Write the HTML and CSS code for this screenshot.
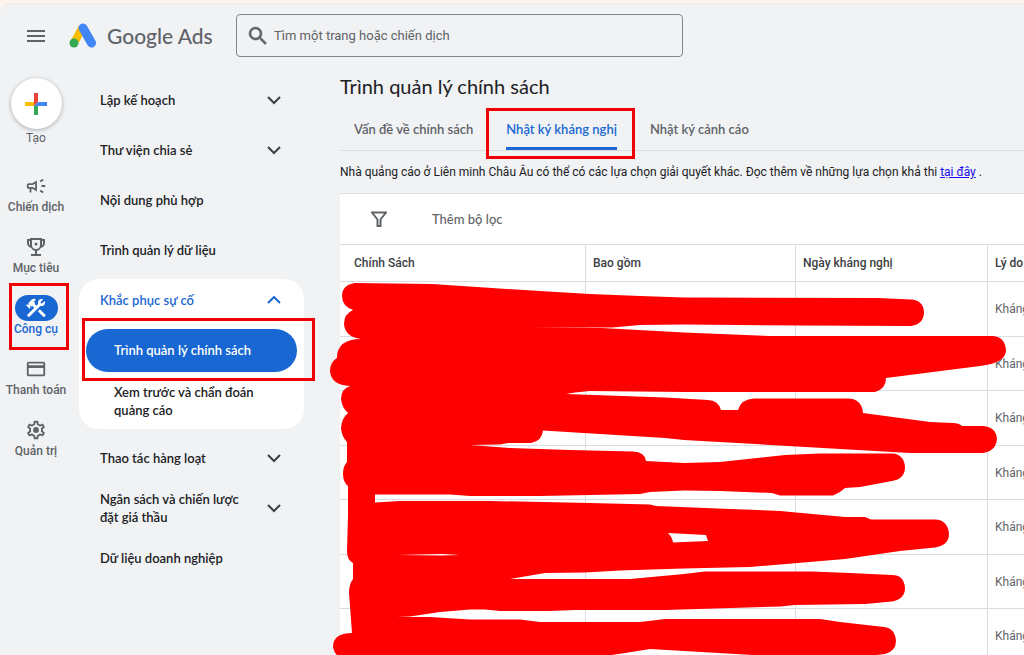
FILE: index.html
```html
<!DOCTYPE html>
<html lang="vi">
<head>
    <meta charset="UTF-8">
    <meta name="viewport" content="width=device-width, initial-scale=1.0">
    <title>Trình quản lý chính sách - Google Ads</title>
    <link rel="stylesheet" href="styles.css">
</head>
<body>
<div class="app">

    <header class="topbar">
        <button class="icon-btn" aria-label="Menu">
            <svg width="18" height="12" viewBox="0 0 18 12"><path d="M0 0h18v2H0zM0 5h18v2H0zM0 10h18v2H0z"/></svg>
        </button>
        <a class="logo" href="#">
            <svg width="28" height="26" viewBox="0 0 28 26">
                <path d="M13.500 4.500 5 20" stroke="#fbbc04" stroke-width="8" stroke-linecap="butt"/>
                <path d="M14 5 22.500 20" stroke="#4285f4" stroke-width="9" stroke-linecap="round"/>
                <circle cx="5" cy="20" r="4.500" fill="#34a853"/>
            </svg>
            <span>Google Ads</span>
        </a>
        <form class="search">
            <svg width="24" height="24" viewBox="0 0 24 24"><path stroke-width=".6" d="M15.500 14h-.79l-.28-.27A6.470 6.470 0 0 0 16 9.500 6.500 6.500 0 1 0 9.500 16c1.610 0 3.090-.59 4.230-1.570l.27.28v.79l5 4.990L20.490 19l-4.990-5zm-6 0C7.010 14 5 11.990 5 9.500S7.010 5 9.500 5 14 7.010 14 9.500 11.990 14 9.500 14z"/></svg>
            <input type="text" placeholder="Tìm một trang hoặc chiến dịch" aria-label="Tìm một trang hoặc chiến dịch">
        </form>
    </header>

    <div class="layout">
        <nav class="rail">
            <a class="rail-item create" href="#">
                <span class="create-btn">
                    <svg width="22" height="22" viewBox="0 0 22 22">
                        <path fill="#ea4335" d="M9 0h4v9l-4 4z"/>
                        <path fill="#fbbc04" d="M0 9h9v4H0z"/>
                        <path fill="#4285f4" d="M13 9h9v4H9z"/>
                        <path fill="#34a853" d="M9 13h4v9H9z"/>
                    </svg>
                </span>
                Tạo
            </a>
            <a class="rail-item" href="#">
                <span class="rail-icon"><svg width="22" height="22" viewBox="0 0 24 24"><path d="M18 11h4v2h-4zM16 17.610c.96.71 2.210 1.650 3.200 2.390.4-.53.8-1.070 1.200-1.600-.99-.74-2.240-1.680-3.200-2.400-.4.540-.8 1.080-1.200 1.610zM20.400 5.600c-.4-.53-.8-1.070-1.200-1.600-.99.740-2.240 1.680-3.200 2.400.4.530.8 1.070 1.200 1.600.96-.72 2.210-1.650 3.200-2.400zM4 9c-1.100 0-2 .9-2 2v2c0 1.100.9 2 2 2h1v4h2v-4h1l5 3V6L8 9H4zm5.030 1.710L11 9.530v4.940l-1.970-1.180-.48-.29H4v-2h4.550l.48-.29z"/></svg></span>
                Chiến dịch
            </a>
            <a class="rail-item" href="#">
                <span class="rail-icon"><svg width="24" height="24" viewBox="0 0 24 24"><path d="M21 4h-3V3H6v1H3v4c0 2.400 1.700 4.300 4 4.800A5.600 5.600 0 0 0 11 15.900V19H7v2h10v-2h-4v-3.100a5.600 5.600 0 0 0 4-3.100c2.300-.5 4-2.400 4-4.800zM5 8V6h1v4.600C5.400 10 5 9.100 5 8zm11 2a4 4 0 0 1-8 0V5h8zm3-2c0 1.100-.4 2-1 2.600V6h1z"/><circle cx="12" cy="9" r="1.500"/></svg></span>
                Mục tiêu
            </a>
            <a class="rail-item active" href="#">
                <span class="rail-icon"><svg width="24" height="24" viewBox="0 0 24 24"><path d="M13.780 15.300 19.780 21.300 21.890 19.140 15.890 13.140ZM17.500 10.100C17.110 10.100 16.690 10.050 16.360 9.910L4.970 21.250 2.860 19.140 10.270 11.740 8.500 9.960 7.780 10.660 6.330 9.250V12.110L5.630 12.810 2.110 9.250 2.810 8.550H5.620L4.220 7.140 7.780 3.580C8.950 2.410 10.830 2.410 12 3.580L9.890 5.740 11.300 7.140 10.590 7.850 12.380 9.630 14.200 7.750C14.060 7.420 14 7 14 6.630 14 4.660 15.560 3.110 17.500 3.110 18.090 3.110 18.610 3.250 19.080 3.530L16.410 6.200 17.910 7.700 20.580 5.030C20.860 5.500 21 6 21 6.630 21 8.550 19.450 10.100 17.500 10.100Z"/></svg></span>
                Công cụ
                <span class="mark mark-rail"></span>
            </a>
            <a class="rail-item" href="#">
                <span class="rail-icon"><svg width="22" height="22" viewBox="0 0 24 24"><path d="M20 4H4c-1.110 0-1.990.89-1.990 2L2 18c0 1.110.89 2 2 2h16c1.110 0 2-.89 2-2V6c0-1.110-.89-2-2-2zm0 14H4v-7h16v7zm0-10H4V6h16v2z"/></svg></span>
                Thanh toán
            </a>
            <a class="rail-item" href="#">
                <span class="rail-icon"><svg width="22" height="22" viewBox="0 0 24 24"><path d="M19.430 12.980c.04-.32.07-.64.07-.98s-.03-.66-.07-.98l2.110-1.650c.19-.15.24-.42.12-.64l-2-3.460a.5.5 0 0 0-.61-.22l-2.490 1a7.300 7.300 0 0 0-1.690-.98l-.38-2.650A.49.490 0 0 0 14 2h-4a.49.490 0 0 0-.49.420l-.38 2.650c-.61.250-1.170.590-1.690.98l-2.490-1a.5.5 0 0 0-.61.220l-2 3.460c-.13.220-.07.490.12.640l2.110 1.650a7.900 7.900 0 0 0 0 1.960l-2.110 1.650c-.19.150-.24.420-.12.640l2 3.460c.12.220.39.300.61.220l2.490-1c.52.400 1.080.730 1.690.98l.38 2.650c.03.240.24.420.49.420h4c.25 0 .46-.18.490-.42l.38-2.650c.61-.25 1.170-.59 1.690-.98l2.490 1c.23.090.49 0 .61-.22l2-3.460a.5.5 0 0 0-.12-.64zm-1.980-1.710c.04.310.05.520.05.730s-.02.430-.05.730l-.14 1.130.89.700 1.080.840-.7 1.210-1.270-.51-1.040-.42-.9.680c-.43.320-.84.560-1.250.730l-1.060.43-.16 1.130-.2 1.350h-1.400l-.35-2.480-1.060-.43c-.43-.18-.83-.41-1.230-.71l-.91-.7-1.060.43-1.270.51-.7-1.210 1.970-1.540-.14-1.130c-.03-.31-.05-.54-.05-.74s.02-.43.050-.73l.14-1.130-1.970-1.540.7-1.210 1.270.51 1.040.42.9-.68c.43-.32.84-.56 1.250-.73l1.060-.43.350-2.480h1.390l.35 2.480 1.060.43c.43.180.83.410 1.230.71l.91.700 1.060-.43 1.270-.51.700 1.210-1.960 1.540z"/><circle cx="12" cy="12" r="3.200"/></svg></span>
                Quản trị
            </a>
        </nav>

        <nav class="menu">
            <button class="menu-item">Lập kế hoạch <svg class="chevron" viewBox="0 0 14 9"><path d="M1 1l6 6 6-6"/></svg></button>
            <button class="menu-item">Thư viện chia sẻ <svg class="chevron" viewBox="0 0 14 9"><path d="M1 1l6 6 6-6"/></svg></button>
            <a class="menu-item" href="#">Nội dung phù hợp</a>
            <a class="menu-item" href="#">Trình quản lý dữ liệu</a>
            <div class="menu-group">
                <button class="menu-item open">Khắc phục sự cố <svg class="chevron" viewBox="0 0 14 9"><path d="M1 7l6-6 6 6"/></svg></button>
                <a class="sub-item selected" href="#">Trình quản lý chính sách<span class="mark mark-menu"></span></a>
                <a class="sub-item" href="#">Xem trước và chẩn đoán quảng cáo</a>
            </div>
            <button class="menu-item">Thao tác hàng loạt <svg class="chevron" viewBox="0 0 14 9"><path d="M1 1l6 6 6-6"/></svg></button>
            <button class="menu-item">Ngân sách và chiến lược đặt giá thầu <svg class="chevron" viewBox="0 0 14 9"><path d="M1 1l6 6 6-6"/></svg></button>
            <a class="menu-item" href="#">Dữ liệu doanh nghiệp</a>
        </nav>

        <main class="content">
            <h1>Trình quản lý chính sách</h1>
            <div class="tabs">
                <a class="tab" href="#">Vấn đề về chính sách</a>
                <a class="tab current" href="#">Nhật ký kháng nghị<span class="mark mark-tab"></span></a>
                <a class="tab" href="#">Nhật ký cảnh cáo</a>
            </div>
            <p class="notice">Nhà quảng cáo ở Liên minh Châu Âu có thể có các lựa chọn giải quyết khác. Đọc thêm về những lựa chọn khả thi <a href="#">tại đây</a> .</p>

            <div class="card">
                <div class="filter-bar">
                    <svg width="16" height="16" viewBox="0 0 16 16"><path d="M1 1.500h14L9.500 8.500V15h-3V8.500z" fill="none" stroke="#5f6368" stroke-width="2"/></svg>
                    <button class="add-filter">Thêm bộ lọc</button>
                </div>
                <table>
                    <thead>
                        <tr><th class="col-policy">Chính Sách</th><th class="col-scope">Bao gồm</th><th class="col-date">Ngày kháng nghị</th><th>Lý do</th></tr>
                    </thead>
                    <tbody>
                        <tr><td></td><td></td><td></td><td>Kháng</td></tr>
                        <tr><td></td><td></td><td></td><td>Kháng</td></tr>
                        <tr><td></td><td></td><td></td><td>Kháng</td></tr>
                        <tr><td></td><td></td><td></td><td>Kháng</td></tr>
                        <tr><td></td><td></td><td></td><td>Kháng</td></tr>
                        <tr><td></td><td></td><td></td><td>Kháng</td></tr>
                        <tr><td></td><td></td><td></td><td>Kháng</td></tr>
                    </tbody>
                </table>
                <!-- marker strokes that hide the account data -->
                <svg class="redaction" width="680" height="374" viewBox="330 281 680 374">
                    <path d="M355 282Q342 284 342 295Q342 305 353 309Q344 313 344 323Q345 336 361 338Q337 338 337 357Q330 361 330 370Q331 384 350 385Q341 388 341 398Q342 407 348 412Q341 418 341 428Q342 436 347 441V461Q343 465 343 473Q343 481 348 485V515L347 550Q347 559 353 562V578Q349 583 349 592L352 632Q333 632 333 646Q334 652 338 655H605L625 652 650 648 684 650 770 655H868L885 653Q896 650 896 640Q895 627 884 626L840 621 820 618H665L640 621H540L520 618.500H470L430 616H397L410 615.500 440 611 470 608.500H485L500 610H550L575 609H665L780 605.500 795 604 865 603 892 600.500Q905 598 905 587Q904 574 892 574L850 572 812 570.500H705L684 573 630 578H510L545 572 585 571.500 620 569.500 684 567.500 750 566 845 558 900 550 935 546.500Q949 544 949 533Q948 519 935 518.500H871L865 516H845L780 510 656 505 650 503.500 590 502 490 500H400L375 501.500V493.500H450L470 495H540L640 493 650 491 684 489.500 720 490 772 492 780 494.500H833Q840 492 845 487L860 486 892 480Q905 478 905 466Q904 453 892 452.500H820L785 454 720 461 684 462 646 460Q645 451 633 450.500L570 449 510 447 470 444 500 443.500 508 442H531Q542 440 543 429.500L665 437 684 439 910 452H983Q996 450 997 438Q996 426 983 425H962Q959 422 953 422L930 421 863 412Q862 398 848 397.500H754Q741 398 738 409H721Q718 399 708 399L665 396.500 566 393 575 391.500 590 390 684 391H875Q886 388 886 377L980 365Q1006 362 1006 349Q1005 336 993 335H770L684 331.500 602 327 530 326.500H612L640 324 684 323.500 800 324.500 911 325Q924 323 924 311Q923 299 911 298.500L878 297 684 296.500 640 295 590 293 540 290 507 288 432 283Z"/>
                    <path class="gap" d="M668 532l38 2 2 6-35 1.500q-1-6-5-9.500zM398 554l44-1 18 1-18 .5z"/>
                </svg>
            </div>
        </main>
    </div>
</div>
</body>
</html>
```
FILE: styles.css
```css
* {
    box-sizing: border-box;
}
body {
    margin: 0;
    padding-top: 3px;
    height: 100vh;
    overflow: hidden;
    background: #fff5ef;
    color: #202124;
    font-family: Roboto, Arial, sans-serif;
    font-size: 12px;
}
a {
    color: inherit;
    text-decoration: none;
}
button {
    border: none;
    background: none;
    padding: 0;
    color: inherit;
    font: inherit;
    text-align: left;
    cursor: pointer;
}
.app {
    height: 100%;
    overflow: hidden;
    background: #f0f2f4;
    border-top: 1px solid #f7e6e1;
    border-top-left-radius: 10px;
}

/* top bar */
.topbar {
    display: flex;
    align-items: center;
    height: 63px;
    padding-left: 27px;
}
.icon-btn {
    display: flex;
    margin-right: 24px;
    fill: #5f6368;
}
.logo {
    display: flex;
    align-items: center;
    gap: 10px;
    width: 167px;
    color: #5f6368;
    font-family: Lato, sans-serif;
    font-size: 21px;
    font-weight: 500;
    white-space: nowrap;
}
.logo svg {
    fill: none;
}
.search {
    display: flex;
    align-items: center;
    gap: 4px;
    flex: 0 1 447px;
    height: 43px;
    padding-left: 9px;
    border: 1px solid #80868b;
    border-radius: 4px;
}
.search svg {
    fill: #5f6368;
    stroke: #5f6368;
}
.search input {
    flex: 1;
    border: none;
    outline: none;
    padding: 0;
    background: transparent;
    font-family: inherit;
    font-size: 13px;
}
.search input::placeholder {
    color: #5f6368;
    opacity: 1;
}

/* left rail */
.layout {
    display: flex;
    align-items: flex-start;
}
.rail {
    flex: 0 0 72px;
    padding-top: 11px;
}
.rail-item {
    position: relative;
    display: flex;
    flex-direction: column;
    align-items: center;
    height: 61px;
    color: #5f6368;
    font-weight: 500;
    line-height: 16px;
    white-space: nowrap;
}
.rail-item svg {
    fill: #5f6368;
}
.rail-icon {
    display: flex;
    align-items: center;
    justify-content: center;
    width: 43px;
    height: 26px;
    border-radius: 13px;
}
.rail-item.active {
    color: #1967d2;
}
.active .rail-icon {
    background: #1967d2;
}
.active .rail-icon svg {
    fill: #fff;
}
.rail-item.create {
    height: 95px;
    font-weight: 400;
}
.create-btn {
    display: flex;
    align-items: center;
    justify-content: center;
    width: 51px;
    height: 51px;
    margin-bottom: 1px;
    border-radius: 50%;
    background: #fff;
    box-shadow: 0 1px 4px rgba(60, 64, 67, 0.4);
}

/* secondary menu */
.menu {
    display: flex;
    flex-direction: column;
    gap: 8px;
    flex: 0 0 225px;
    margin: 12px 36px 0 7px;
    font-family: Lato, sans-serif;
    font-size: 13px;
    font-weight: 600;
    line-height: 18px;
}
.menu-item {
    display: flex;
    align-items: center;
    justify-content: space-between;
    gap: 20px;
    width: 100%;
    min-height: 42px;
    padding: 3px 23px 3px 21px;
}
.chevron {
    flex: none;
    width: 14px;
    height: 9px;
    fill: none;
    stroke: #3c4043;
    stroke-width: 2;
}
.menu-group {
    padding-bottom: 7px;
    border-radius: 20px;
    background: #fff;
}
.menu-item.open {
    margin-bottom: 8px;
    color: #1967d2;
}
.open .chevron {
    stroke: #1967d2;
}
.sub-item {
    position: relative;
    display: block;
    margin: 0 7px;
    padding: 3px 28px;
}
.sub-item.selected {
    margin-bottom: 8px;
    padding: 12px 28px 13px;
    border-radius: 22px;
    background: #1967d2;
    color: #fff;
    white-space: nowrap;
}

/* red highlight frames */
.mark {
    position: absolute;
    border: 3px solid #f00000;
    pointer-events: none;
}
.mark-rail {
    top: -12px;
    left: 9px;
    right: 3px;
    bottom: 6px;
}
.mark-menu {
    top: -11px;
    left: -4px;
    right: -18px;
    bottom: -9px;
}
.mark-tab {
    top: -1px;
    left: -20px;
    right: -18px;
    bottom: -12px;
}

/* main area */
.content {
    flex: 1;
    min-width: 0;
    padding-top: 6px;
}
h1 {
    margin: 0;
    font-family: Lato, sans-serif;
    font-size: 20px;
    font-weight: 400;
    line-height: 26px;
}
.tabs {
    display: flex;
    gap: 33px;
    margin-top: 10px;
    padding-left: 14px;
    height: 42px;
    border-bottom: 1px solid #dadce0;
    color: #5f6368;
    font-family: Lato, sans-serif;
    font-size: 13px;
    font-weight: 600;
    line-height: 40px;
    white-space: nowrap;
}
.tab {
    position: relative;
}
.tab.current {
    border-bottom: 3px solid #1967d2;
    color: #1967d2;
}
.notice {
    margin: 0;
    padding: 13px 0 12px;
    line-height: 17px;
    white-space: nowrap;
}
.notice a {
    color: #1a0dee;
    text-decoration: underline;
}
.card {
    position: relative;
    border-top: 1px solid #dadce0;
    background: #fff;
}
.filter-bar {
    display: flex;
    align-items: center;
    gap: 45px;
    height: 50px;
    padding-left: 31px;
}
.add-filter {
    color: #5f6368;
    font-family: Lato, sans-serif;
    font-size: 13px;
    font-weight: 500;
}
table {
    width: 100%;
    border-collapse: separate;
    border-spacing: 0;
    table-layout: fixed;
}
th,
td {
    padding: 0 0 0 7px;
    border-right: 1px solid #dadce0;
    border-bottom: 1px solid #dadce0;
    overflow: hidden;
    color: #5f6368;
    font-size: 12px;
    font-weight: 400;
    text-align: left;
    white-space: nowrap;
}
th {
    height: 38px;
    border-top: 1px solid #dadce0;
    color: #3c4043;
    font-weight: 500;
}
th:first-child {
    padding-left: 14px;
}
th:last-child,
td:last-child {
    border-right: none;
}
td {
    height: 55px;
}
tr:nth-child(even) td {
    height: 54px;
}
.col-policy {
    width: 246px;
}
.col-scope {
    width: 210px;
}
.col-date {
    width: 192px;
}
.redaction {
    position: absolute;
    top: 88px;
    left: -10px;
    fill: #ff0000;
}
.redaction .gap {
    fill: #fff;
}
```
